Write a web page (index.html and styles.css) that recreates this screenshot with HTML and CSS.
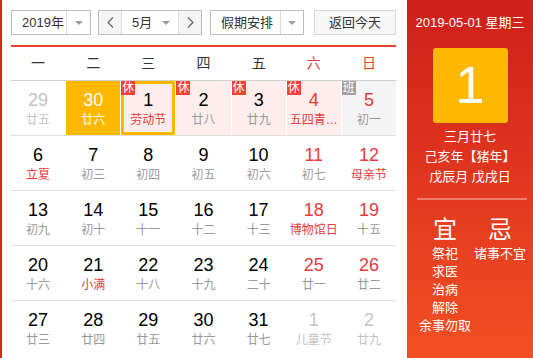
FILE: index.html
```html
<!DOCTYPE html>
<html lang="zh-CN">
<head>
  <meta charset="UTF-8" />
  <title>万年历</title>
  <link rel="stylesheet" href="styles.css">
</head>
<body>

  <div class="calendar">
    <div class="cal-main">
      <div class="toolbar">
        <div class="select year">
          <span class="select-label">2019年</span>
          <span class="select-arrow"><i class="tri"></i></span>
        </div>
        <div class="month-group">
          <span class="nav-btn">
            <svg width="7" height="11" viewBox="0 0 7 11"><polyline points="6,0.5 1,5.5 6,10.5" fill="none" stroke="#666" stroke-width="1.2"/></svg>
          </span>
          <div class="month">
            <span>5月</span>
            <i class="tri"></i>
          </div>
          <span class="nav-btn">
            <svg width="7" height="11" viewBox="0 0 7 11"><polyline points="1,0.5 6,5.5 1,10.5" fill="none" stroke="#666" stroke-width="1.2"/></svg>
          </span>
        </div>
        <div class="select holiday">
          <span class="select-label">假期安排</span>
          <span class="select-arrow"><i class="tri"></i></span>
        </div>
        <div class="today-btn">返回今天</div>
      </div>

      <div class="weekdays">
        <span>一</span><span>二</span><span>三</span><span>四</span><span>五</span>
        <span class="wk">六</span><span class="wk">日</span>
      </div>

      <div class="week">
        <div class="day other"><div class="num">29</div><div class="lunar">廿五</div></div>
        <div class="day today"><div class="num">30</div><div class="lunar">廿六</div></div>
        <div class="day rest selected"><span class="badge">休</span><div class="num">1</div><div class="lunar fest">劳动节</div></div>
        <div class="day rest"><span class="badge">休</span><div class="num">2</div><div class="lunar">廿八</div></div>
        <div class="day rest"><span class="badge">休</span><div class="num">3</div><div class="lunar">廿九</div></div>
        <div class="day rest weekend"><span class="badge">休</span><div class="num">4</div><div class="lunar fest">五四青年节</div></div>
        <div class="day work weekend"><span class="badge">班</span><div class="num">5</div><div class="lunar">初一</div></div>
      </div>
      <div class="week">
        <div class="day"><div class="num">6</div><div class="lunar fest">立夏</div></div>
        <div class="day"><div class="num">7</div><div class="lunar">初三</div></div>
        <div class="day"><div class="num">8</div><div class="lunar">初四</div></div>
        <div class="day"><div class="num">9</div><div class="lunar">初五</div></div>
        <div class="day"><div class="num">10</div><div class="lunar">初六</div></div>
        <div class="day weekend"><div class="num">11</div><div class="lunar">初七</div></div>
        <div class="day weekend"><div class="num">12</div><div class="lunar fest">母亲节</div></div>
      </div>
      <div class="week">
        <div class="day"><div class="num">13</div><div class="lunar">初九</div></div>
        <div class="day"><div class="num">14</div><div class="lunar">初十</div></div>
        <div class="day"><div class="num">15</div><div class="lunar">十一</div></div>
        <div class="day"><div class="num">16</div><div class="lunar">十二</div></div>
        <div class="day"><div class="num">17</div><div class="lunar">十三</div></div>
        <div class="day weekend"><div class="num">18</div><div class="lunar fest">博物馆日</div></div>
        <div class="day weekend"><div class="num">19</div><div class="lunar">十五</div></div>
      </div>
      <div class="week">
        <div class="day"><div class="num">20</div><div class="lunar">十六</div></div>
        <div class="day"><div class="num">21</div><div class="lunar fest">小满</div></div>
        <div class="day"><div class="num">22</div><div class="lunar">十八</div></div>
        <div class="day"><div class="num">23</div><div class="lunar">十九</div></div>
        <div class="day"><div class="num">24</div><div class="lunar">二十</div></div>
        <div class="day weekend"><div class="num">25</div><div class="lunar">廿一</div></div>
        <div class="day weekend"><div class="num">26</div><div class="lunar">廿二</div></div>
      </div>
      <div class="week last">
        <div class="day"><div class="num">27</div><div class="lunar">廿三</div></div>
        <div class="day"><div class="num">28</div><div class="lunar">廿四</div></div>
        <div class="day"><div class="num">29</div><div class="lunar">廿五</div></div>
        <div class="day"><div class="num">30</div><div class="lunar">廿六</div></div>
        <div class="day"><div class="num">31</div><div class="lunar">廿七</div></div>
        <div class="day other"><div class="num">1</div><div class="lunar">儿童节</div></div>
        <div class="day other"><div class="num">2</div><div class="lunar">廿九</div></div>
      </div>
    </div>

    <div class="cal-side">
      <div class="side-date">2019-05-01 星期三</div>
      <div class="side-day">1</div>
      <div class="side-lunar">三月廿七</div>
      <div class="side-lunar">己亥年【猪年】</div>
      <div class="side-lunar">戊辰月 戊戌日</div>
      <div class="side-line"></div>
      <div class="yiji">
        <div class="yiji-col">
          <div class="yiji-title">宜</div>
          <div>祭祀</div>
          <div>求医</div>
          <div>治病</div>
          <div>解除</div>
          <div>余事勿取</div>
        </div>
        <div class="yiji-col">
          <div class="yiji-title">忌</div>
          <div>诸事不宜</div>
        </div>
      </div>
    </div>
  </div>

</body>
</html>
```

FILE: styles.css
```css
* { margin: 0; padding: 0; box-sizing: border-box; }
body {
  background: #fff;
  font-family: "Liberation Sans", "Noto Sans CJK SC", sans-serif;
  color: #333;
  overflow: hidden;
}
.calendar {
  display: flex;
  width: 533px;
  height: 358px;
}

/* Left: month grid */
.cal-main {
  width: 407px;
  border-left: 2px solid #d9261c;
  padding: 10px 11px 0 9px;
}
.toolbar {
  display: flex;
  height: 25px;
  font-size: 13px;
  margin-bottom: 10px;
}
.select, .month-group {
  display: flex;
  border: 1px solid #bdbdbd;
  height: 25px;
  background: #fff;
}
.select-label {
  line-height: 23px;
  padding-left: 10px;
}
.select-arrow {
  display: flex;
  align-items: center;
  justify-content: center;
  border-left: 1px solid #dcdcdc;
}
.tri {
  width: 0;
  height: 0;
  border-left: 4px solid transparent;
  border-right: 4px solid transparent;
  border-top: 4px solid #9c9c9c;
}
.year { width: 80px; }
.year .select-label { width: 54px; }
.year .select-arrow { width: 24px; }

.month-group {
  width: 104px;
  margin-left: 7px;
}
.nav-btn {
  width: 22px;
  display: flex;
  align-items: center;
  justify-content: center;
  background: #f5f5f5;
}
.month {
  width: 58px;
  display: flex;
  align-items: center;
  justify-content: space-between;
  padding: 0 8px 0 10px;
  border-left: 1px solid #dcdcdc;
  border-right: 1px solid #dcdcdc;
  line-height: 23px;
}

.holiday {
  width: 94px;
  margin-left: 8px;
}
.holiday .select-label { width: 69px; }
.holiday .select-arrow { width: 23px; }

.today-btn {
  width: 82px;
  margin-left: 10px;
  border: 1px solid #d6d6d6;
  background: #f7f7f7;
  text-align: center;
  line-height: 23px;
}

.weekdays {
  display: grid;
  grid-template-columns: repeat(7, 1fr);
  column-gap: 1px;
  border-top: 2px solid #e8412f;
  border-bottom: 1px solid #d0d0d0;
  height: 36px;
  font-size: 14px;
  line-height: 33px;
  text-align: center;
  color: #333;
}
.weekdays .wk { color: #e63b3b; }

.week {
  display: grid;
  grid-template-columns: repeat(7, 1fr);
  column-gap: 1px;
  height: 55px;
  border-bottom: 1px solid #e0e0e0;
}
.week.last { border-bottom: none; }

.day {
  position: relative;
  text-align: center;
  padding: 8px 3px 0;
  overflow: hidden;
}
.num {
  font-size: 18px;
  line-height: 22px;
  color: #000;
}
.lunar {
  font-size: 12px;
  line-height: 18px;
  color: #999;
  white-space: nowrap;
  overflow: hidden;
  text-overflow: ellipsis;
}
.lunar.fest { color: #e63b3b; }
.weekend .num { color: #e63b3b; }

.day.other .num, .day.other .lunar { color: #c3c3c3; }

.day.today { background: #ffb800; }
.day.today .num, .day.today .lunar { color: #fff; }

.day.rest { background: #fdeeed; }
.day.work { background: #f4f4f4; }
.day.selected { box-shadow: inset 0 0 0 3px #ffb800; }

.badge {
  position: absolute;
  top: 0;
  left: 0;
  width: 14px;
  height: 14px;
  font-size: 12px;
  line-height: 14px;
  color: #fff;
  background: #f2403a;
}
.work .badge { background: #9e9e9e; }

/* Right: selected day detail */
.cal-side {
  width: 126px;
  background: linear-gradient(#ce1f1b, #f34f23);
  color: #fff;
  padding-top: 13px;
  text-align: center;
}
.side-date {
  font-size: 13px;
  line-height: 20px;
}
.side-day {
  width: 75px;
  height: 75px;
  margin: 15px auto 4px;
  background: #ffb800;
  border-radius: 3px;
  font-size: 52px;
  line-height: 75px;
}
.side-lunar {
  font-size: 13px;
  line-height: 20px;
}
.side-line {
  height: 2px;
  margin: 11px 6px 0 10px;
  background: rgba(255, 255, 255, 0.35);
}
.yiji {
  display: flex;
  padding: 15px 6px 0 10px;
}
.yiji-col {
  font-size: 13px;
  line-height: 18px;
  white-space: nowrap;
}
.yiji-col:first-child { width: 56px; }
.yiji-col:last-child { width: 54px; }
.yiji-title {
  font-size: 24px;
  line-height: 30px;
}
```
